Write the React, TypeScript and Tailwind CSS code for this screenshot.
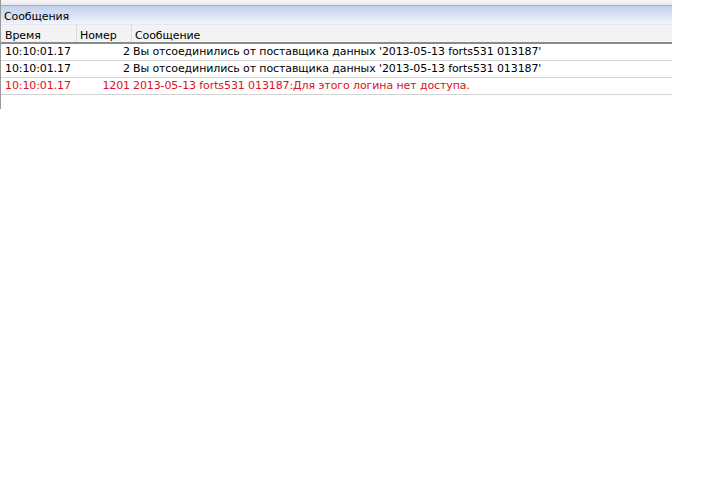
import React from "react";

const rows = [
  { t: "10:10:01.17", n: "2", m: "Вы отсоединились от поставщика данных '2013-05-13 forts531 013187'", red: false },
  { t: "10:10:01.17", n: "2", m: "Вы отсоединились от поставщика данных '2013-05-13 forts531 013187'", red: false },
  { t: "10:10:01.17", n: "1201", m: "2013-05-13 forts531 013187:Для этого логина нет доступа.", red: true },
];

export default function App() {
  return (
    <div className="w-[724px] h-[489px] bg-white" style={{ fontFamily: "'DejaVu Sans', Tahoma, sans-serif" }}>
      <div className="w-[672px] h-[109px] border-l border-[#9a9a9a] text-[11px] leading-[13px] tracking-[-0.1px]">
        <div className="h-[6px] bg-gradient-to-b from-[#f7f7fa] to-[#e9e9ee] border-b border-[#a8acb0]"></div>
        <div className="h-[19px] bg-gradient-to-b from-[#c3d2ea] via-[#d7e2f3] to-[#f1f5fc] border-b border-[#e4e8f0] pl-[3px] pt-[4px] text-black">
          Сообщения
        </div>
        <div className="flex h-[19px] bg-[#f3f3f3] border-b-2 border-[#8a8a8a] text-black">
          <div className="w-[76px] pl-[4px] pt-[4px] border-r border-[#dcdcdc]">Время</div>
          <div className="w-[55px] pl-[3px] pt-[4px] border-r border-[#dcdcdc]">Номер</div>
          <div className="flex-1 pl-[3px] pt-[4px]">Сообщение</div>
        </div>
        {rows.map((r, i) => (
          <div key={i} className={`flex h-[17px] border-b border-[#d4d4d4] ${r.red ? "text-[#dc1020]" : "text-black"}`}>
            <div className="w-[77px] pl-[4px] pt-[1px] whitespace-nowrap">{r.t}</div>
            <div className="w-[53px] pr-[1px] pt-[1px] text-right whitespace-nowrap">{r.n}</div>
            <div className="flex-1 pl-[2px] pt-[1px] whitespace-nowrap">{r.m}</div>
          </div>
        ))}
      </div>
    </div>
  );
}
